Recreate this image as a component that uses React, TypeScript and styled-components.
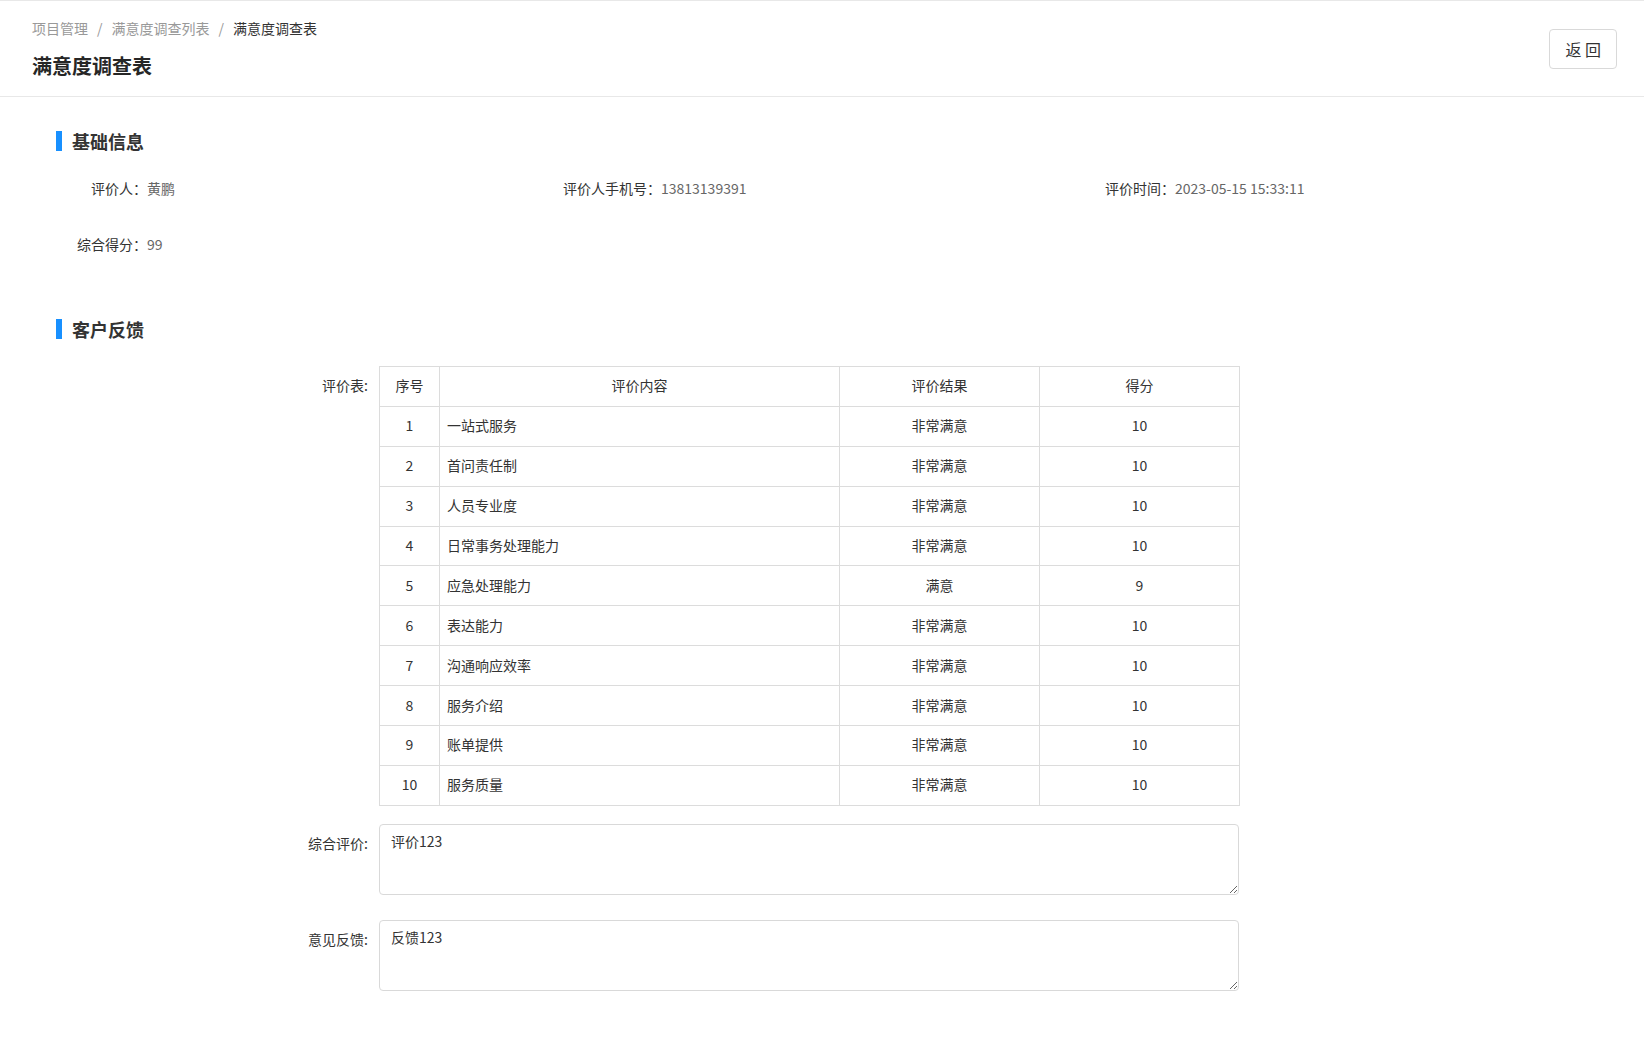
import React from 'react';
import styled, { createGlobalStyle } from 'styled-components';

const GlobalStyle = createGlobalStyle`
  html, body { margin: 0; padding: 0; background: #fff; }
  body {
    font-family: "Noto Sans CJK SC", "Noto Sans", sans-serif;
    font-size: 14px;
    line-height: 22px;
    color: #333;
  }
  * { box-sizing: border-box; }
`;

const Page = styled.div`
  min-height: 1051px;
  background: #fff;
`;

const Header = styled.header`
  display: flex;
  align-items: center;
  justify-content: space-between;
  height: 97px;
  border-top: 1px solid #e8e8e8;
  border-bottom: 1px solid #e8e8e8;
  padding: 0 27px 0 32px;
`;

const HeaderLeft = styled.div`
  display: flex;
  flex-direction: column;
  gap: 13px;
`;

const Breadcrumb = styled.nav`
  display: flex;
  align-items: center;
  font-size: 14px;
  line-height: 22px;
  color: #999;
`;

const Crumb = styled.span<{ $current?: boolean }>`
  color: ${(p) => (p.$current ? '#333' : '#999')};
`;

const Sep = styled.span`
  margin: 0 9px;
  color: #999;
`;

const Title = styled.h1`
  margin: 0;
  font-size: 20px;
  line-height: 28px;
  font-weight: 700;
  color: #262626;
`;

const BackButton = styled.button`
  height: 40px;
  padding: 0 15px;
  font-family: inherit;
  font-size: 16px;
  color: #333;
  background: #fff;
  border: 1px solid #d9d9d9;
  border-radius: 4px;
  cursor: pointer;
  white-space: pre;
`;

const Body = styled.main`
  padding: 32px 42px 40px;
`;

const SectionTitle = styled.h2<{ $top?: number }>`
  display: flex;
  align-items: center;
  gap: 10px;
  margin: ${(p) => p.$top ?? 0}px 0 0;
  padding-left: 14px;
  font-size: 18px;
  line-height: 24px;
  font-weight: 700;
  color: #333;
  &::before {
    content: '';
    display: block;
    width: 6px;
    height: 20px;
    background: #1890ff;
  }
`;

const InfoGrid = styled.div`
  display: grid;
  grid-template-columns: repeat(3, 514px);
  row-gap: 24px;
  margin-top: 19px;
`;

const InfoItem = styled.div`
  display: flex;
  align-items: center;
  height: 32px;
`;

const InfoLabel = styled.span`
  width: 105px;
  flex-shrink: 0;
  text-align: right;
  color: #333;
  white-space: nowrap;
`;

const InfoValue = styled.span`
  color: #666;
`;

const FormRows = styled.div`
  display: flex;
  flex-direction: column;
  margin-top: 25px;
`;

const FormRow = styled.div<{ $gap: number }>`
  display: grid;
  grid-template-columns: 337px 860px;
  margin-bottom: ${(p) => p.$gap}px;
`;

const FormLabel = styled.label`
  padding: 8px 11px 0 0;
  text-align: right;
  line-height: 22px;
  color: #333;
  white-space: nowrap;
`;

const Table = styled.table`
  width: 860px;
  border-collapse: collapse;
  table-layout: fixed;
  font-size: 14px;
  color: #333;
`;

const Cell = styled.td<{ $left?: boolean }>`
  height: 39.9px;
  padding: 0 7px 2px;
  border: 1px solid #dcdcdc;
  text-align: ${(p) => (p.$left ? 'left' : 'center')};
  font-weight: 400;
  vertical-align: middle;
`;

const HeadCell = styled(Cell).attrs({ as: 'th' })``;

const TextArea = styled.textarea`
  display: block;
  width: 860px;
  height: 71px;
  padding: 5px 11px 4px;
  font-family: inherit;
  font-size: 14px;
  line-height: 22px;
  color: #333;
  background: #fff;
  border: 1px solid #d9d9d9;
  border-radius: 4px;
  resize: vertical;
  outline: none;
`;

const rows = [
  { name: '一站式服务', result: '非常满意', score: 10 },
  { name: '首问责任制', result: '非常满意', score: 10 },
  { name: '人员专业度', result: '非常满意', score: 10 },
  { name: '日常事务处理能力', result: '非常满意', score: 10 },
  { name: '应急处理能力', result: '满意', score: 9 },
  { name: '表达能力', result: '非常满意', score: 10 },
  { name: '沟通响应效率', result: '非常满意', score: 10 },
  { name: '服务介绍', result: '非常满意', score: 10 },
  { name: '账单提供', result: '非常满意', score: 10 },
  { name: '服务质量', result: '非常满意', score: 10 },
];

export default function App() {
  return (
    <Page>
      <GlobalStyle />
      <Header>
        <HeaderLeft>
          <Breadcrumb>
            <Crumb>项目管理</Crumb>
            <Sep>/</Sep>
            <Crumb>满意度调查列表</Crumb>
            <Sep>/</Sep>
            <Crumb $current>满意度调查表</Crumb>
          </Breadcrumb>
          <Title>满意度调查表</Title>
        </HeaderLeft>
        <BackButton>返 回</BackButton>
      </Header>
      <Body>
        <SectionTitle>基础信息</SectionTitle>
        <InfoGrid>
          <InfoItem>
            <InfoLabel>评价人：</InfoLabel>
            <InfoValue>黄鹏</InfoValue>
          </InfoItem>
          <InfoItem>
            <InfoLabel>评价人手机号：</InfoLabel>
            <InfoValue>13813139391</InfoValue>
          </InfoItem>
          <InfoItem>
            <InfoLabel>评价时间：</InfoLabel>
            <InfoValue>2023-05-15 15:33:11</InfoValue>
          </InfoItem>
          <InfoItem>
            <InfoLabel>综合得分：</InfoLabel>
            <InfoValue>99</InfoValue>
          </InfoItem>
        </InfoGrid>
        <SectionTitle $top={57}>客户反馈</SectionTitle>
        <FormRows>
          <FormRow $gap={18}>
            <FormLabel>评价表:</FormLabel>
            <Table>
              <colgroup>
                <col style={{ width: 60 }} />
                <col style={{ width: 400 }} />
                <col style={{ width: 200 }} />
                <col style={{ width: 200 }} />
              </colgroup>
              <thead>
                <tr>
                  <HeadCell>序号</HeadCell>
                  <HeadCell>评价内容</HeadCell>
                  <HeadCell>评价结果</HeadCell>
                  <HeadCell>得分</HeadCell>
                </tr>
              </thead>
              <tbody>
                {rows.map((r, i) => (
                  <tr key={i}>
                    <Cell>{i + 1}</Cell>
                    <Cell $left>{r.name}</Cell>
                    <Cell>{r.result}</Cell>
                    <Cell>{r.score}</Cell>
                  </tr>
                ))}
              </tbody>
            </Table>
          </FormRow>
          <FormRow $gap={25}>
            <FormLabel>综合评价:</FormLabel>
            <TextArea readOnly value="评价123" />
          </FormRow>
          <FormRow $gap={0}>
            <FormLabel>意见反馈:</FormLabel>
            <TextArea readOnly value="反馈123" />
          </FormRow>
        </FormRows>
      </Body>
    </Page>
  );
}
